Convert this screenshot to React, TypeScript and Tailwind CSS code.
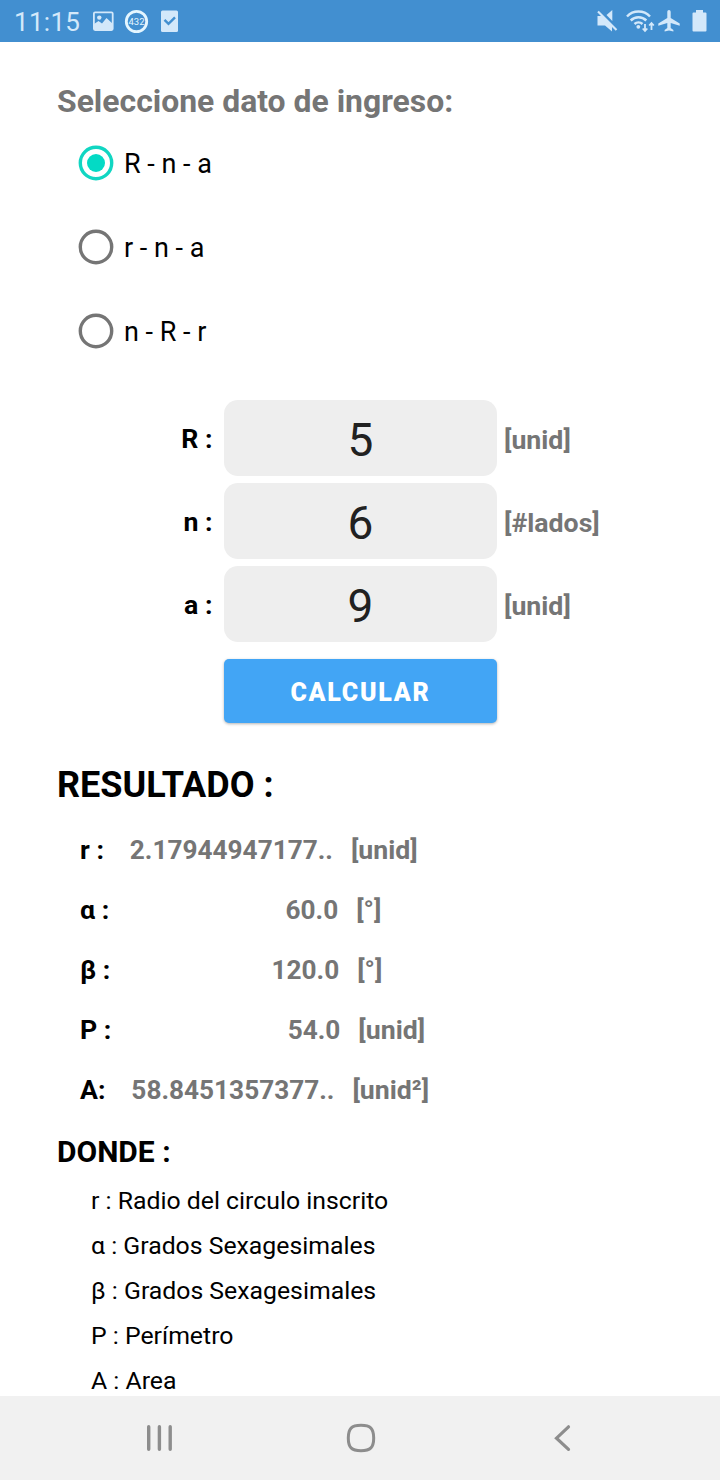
import React, { useState } from 'react';

interface Field {
    label: string;
    value: string;
    unit: string;
}

const OPTIONS = ['R - n - a', 'r - n - a', 'n - R - r'];

const FIELDS: Field[] = [
    { label: 'R :', value: '5', unit: '[unid]' },
    { label: 'n :', value: '6', unit: '[#lados]' },
    { label: 'a :', value: '9', unit: '[unid]' },
];

const RESULTS: Field[] = [
    { label: 'r :', value: '2.17944947177..', unit: '[unid]' },
    { label: 'α :', value: '60.0', unit: '[°]' },
    { label: 'β :', value: '120.0', unit: '[°]' },
    { label: 'P :', value: '54.0', unit: '[unid]' },
    { label: 'A:', value: '58.8451357377..', unit: '[unid²]' },
];

const LEGEND = [
    'r : Radio del circulo inscrito',
    'α : Grados Sexagesimales',
    'β : Grados Sexagesimales',
    'P : Perímetro',
    'A : Area',
];

const StatusBar = () => (
    <header className="h-[42px] shrink-0 bg-[#428fd0] text-[#d3e8fa] flex items-center justify-between pl-[14px] pr-[13px]">
        <div className="flex items-center">
            <span className="w-[78px] text-[26px] leading-[42px] tracking-[0.3px] pt-[2px]">11:15</span>
            <svg width="22" height="22" viewBox="0 0 22 22" fill="none">
                <rect x="1.9" y="2.3" width="18.8" height="17.7" rx="1.2" stroke="currentColor" strokeWidth="1.8" />
                <circle cx="7.3" cy="7.6" r="2.2" fill="currentColor" />
                <path d="M2 17v-3l4.500-3 3.500 2.500 4.500-5.500 6.500 6v6H2z" fill="currentColor" />
            </svg>
            <svg className="ml-[10px]" width="25" height="25" viewBox="0 0 25 25" fill="none">
                <circle cx="12.5" cy="12.5" r="10.2" stroke="#e4f6ff" strokeWidth="2.8" />
                <text x="12.5" y="16" textAnchor="middle" fontSize="9.5" fill="#e4f6ff">432</text>
            </svg>
            <svg className="ml-[12px]" width="17" height="22" viewBox="0 0 17 22" fill="none">
                <rect y="0.5" width="17" height="21.5" rx="1.5" fill="currentColor" />
                <path d="M3.5 9.8l4 4 6.500-6.500" stroke="#428fd0" strokeWidth="2.4" />
            </svg>
        </div>
        <div className="flex items-center">
            <svg width="21" height="22" viewBox="0 0 21 22" fill="none">
                <path d="M0.5 6h5.5l9 9.500v6l-7-6H0.5z" fill="currentColor" />
                <path d="M15.3 0v11L9.500 5z" fill="currentColor" />
                <path d="M2.5 0.5l18 18" stroke="#428fd0" strokeWidth="1.2" />
                <path d="M1 1.500l18.500 18.500" stroke="currentColor" strokeWidth="2.2" />
            </svg>
            <svg className="ml-[8px]" width="29" height="24" viewBox="0 0 29 24" fill="none" stroke="currentColor" strokeWidth="2.5">
                <path d="M1 7.500a16 16 0 0 1 23 0M4.700 11.500a11 11 0 0 1 15.600 0M8.500 15a6 6 0 0 1 8 0" />
                <circle cx="12.3" cy="17.8" r="1.9" fill="currentColor" stroke="none" />
                <path d="M19 15v7M16.700 19.500l2.300 2.500 2.300-2.500M25.500 21v-7M23.200 16.500l2.300-2.500 2.300 2.500" strokeWidth="1.8" />
            </svg>
            <svg className="ml-[3px]" width="22" height="22" viewBox="0 0 22 22" fill="currentColor">
                <path d="M11 0c1 0 1.700.9 1.700 2v6l9 5.500v2.300l-9-2.800v5l2.700 2v1.600L11 20.500l-4.400 1.100V20l2.700-2v-5l-9 2.800v-2.300l9-5.500V2c0-1.100.700-2 1.700-2z" />
            </svg>
            <svg className="ml-[12px]" width="15" height="22" viewBox="0 0 15 22" fill="currentColor">
                <path d="M4 0h7v2.500h2.500a1 1 0 0 1 1 1V20.500a1 1 0 0 1-1 1h-12a1 1 0 0 1-1-1V3.500a1 1 0 0 1 1-1H4z" />
            </svg>
        </div>
    </header>
);

const RadioIcon = ({ checked }: { checked: boolean }) => (
    <svg width="36" height="36" viewBox="0 0 36 36" fill="none">
        <circle cx="18" cy="18" r="15.7" stroke={checked ? '#11d6c2' : '#757575'} strokeWidth="3.4" />
        {checked && <circle cx="18" cy="18" r="9" fill="#03dac5" />}
    </svg>
);

const NavBar = () => (
    <nav className="h-[84px] shrink-0 bg-[#f1f1f1] text-[#8d8d8d] flex items-center justify-between pl-[146px] pr-[149px]">
        <svg width="27" height="28" viewBox="0 0 27 28" stroke="currentColor" strokeWidth="3.4" strokeLinecap="round">
            <path d="M2.700 2.700v22.600M13.400 2.700v22.600M24.200 2.700v22.600" />
        </svg>
        <svg className="mr-[5px]" width="30" height="30" viewBox="0 0 30 30" fill="none" stroke="currentColor" strokeWidth="3">
            <path d="M15 2.300c9.500 0 12.700 3.200 12.700 12.700S24.500 27.700 15 27.700 2.300 24.500 2.300 15 5.500 2.300 15 2.300z" />
        </svg>
        <svg width="18" height="28" viewBox="0 0 18 28" fill="none" stroke="currentColor" strokeWidth="3.2" strokeLinecap="round">
            <path d="M15.500 2.800L3.500 14.200l12 11.200" />
        </svg>
    </nav>
);

export default function App() {
    const [selected, setSelected] = useState(0);

    return (
        <div className="w-[720px] h-[1480px] flex flex-col overflow-hidden bg-white font-['Roboto',sans-serif] text-black">
            <StatusBar />

            <main className="flex-1 min-h-0 overflow-hidden pt-[39px] pl-[57px]">
                <h1 className="text-[31.9px] leading-[40px] font-bold text-[#757575]">Seleccione dato de ingreso:</h1>

                <div className="pl-[21px]">
                    {OPTIONS.map((option, i) => (
                        <button key={option} onClick={() => setSelected(i)} className="h-[84px] flex items-center">
                            <RadioIcon checked={i === selected} />
                            <span className="ml-[10px] pt-[1px] text-[27px] leading-[30px]">{option}</span>
                        </button>
                    ))}
                </div>

                <div className="mt-[27px] flex flex-col gap-[7px]">
                    {FIELDS.map((field) => (
                        <div key={field.label} className="h-[76px] flex items-center text-[26.7px] font-bold">
                            <label className="w-[155.5px] text-right pt-[2px]">{field.label}</label>
                            <input
                                defaultValue={field.value}
                                className="ml-[11.5px] w-[273px] h-[76px] pt-[4px] rounded-[14px] bg-[#eeeeee] text-center text-[46px] font-normal text-[#212121] outline-none"
                            />
                            <span className="ml-[7px] pt-[4px] text-[#757575]">{field.unit}</span>
                        </div>
                    ))}
                </div>

                <button className="block mt-[17px] ml-[167px] w-[273px] h-16 pt-[4px] rounded-[5px] bg-[#42a5f5] text-white text-[25px] font-black tracking-[1.7px] shadow-[0_1px_3px_rgba(0,0,0,0.3)]">
                    CALCULAR
                </button>

                <h2 className="mt-[42px] text-[36px] leading-[40px] font-bold">RESULTADO :</h2>

                <div className="mt-[15px] pl-[23px]">
                    {RESULTS.map((row) => (
                        <div key={row.label} className="h-[60px] flex items-center text-[26.7px] font-bold">
                            <span>{row.label}</span>
                            <span className="w-[229px] pt-[1px] text-right text-[26.2px] text-[#757575]">{row.value}</span>
                            <span className="ml-[18px] text-[#757575]">{row.unit}</span>
                        </div>
                    ))}
                </div>

                <h3 className="mt-[12px] text-[30px] leading-[40px] font-bold">DONDE :</h3>

                <ul className="mt-[6px] pl-[34px] text-[24.8px] leading-[45px]">
                    {LEGEND.map((item) => (
                        <li key={item}>{item}</li>
                    ))}
                </ul>
            </main>

            <NavBar />
        </div>
    );
}
